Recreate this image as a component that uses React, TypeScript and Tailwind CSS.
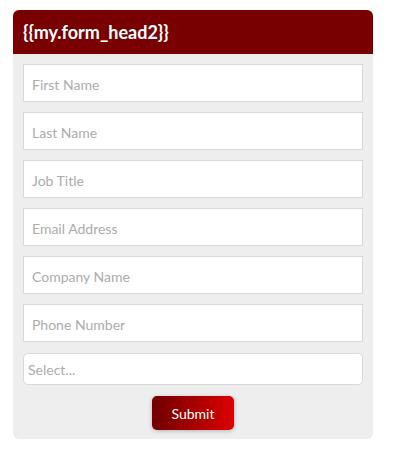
import React from "react";

const fields = ["First Name", "Last Name", "Job Title", "Email Address", "Company Name", "Phone Number"];

export default function App() {
  return (
    <div className="w-[406px] h-[451px] bg-white pt-[10px] pl-[13px]" style={{ fontFamily: "Lato, 'Open Sans', sans-serif" }}>
      <div className="w-[360px] rounded-[6px] bg-[#eeeeee] overflow-hidden">
        <div className="h-[44px] bg-[#780000] flex items-center px-[10px] text-white text-[18px] font-bold">
          {"{{my.form_head2}}"}
        </div>
        <div className="px-[10px] pt-[10px] pb-[9px] flex flex-col">
          {fields.map((f) => (
            <div key={f} className="h-[38px] mb-[10px] bg-white border border-[#d9d9d9] flex items-center pl-[8px] pt-[2px] text-[14px] text-[#acacac]">
              {f}
            </div>
          ))}
          <div className="h-[32px] mt-[1px] bg-white border border-[#d9d9d9] rounded-[5px] flex items-center px-[4px] text-[14px] text-[#acacac]">
            Select...
          </div>
          <div className="flex justify-center mt-[11px]">
            <div className="w-[82px] h-[34px] rounded-[5px] bg-gradient-to-r from-[#700000] to-[#dd0000] shadow-[0_1px_4px_rgba(0,0,0,0.25)] flex items-center justify-center text-white text-[14px]">
              Submit
            </div>
          </div>
        </div>
      </div>
    </div>
  );
}
